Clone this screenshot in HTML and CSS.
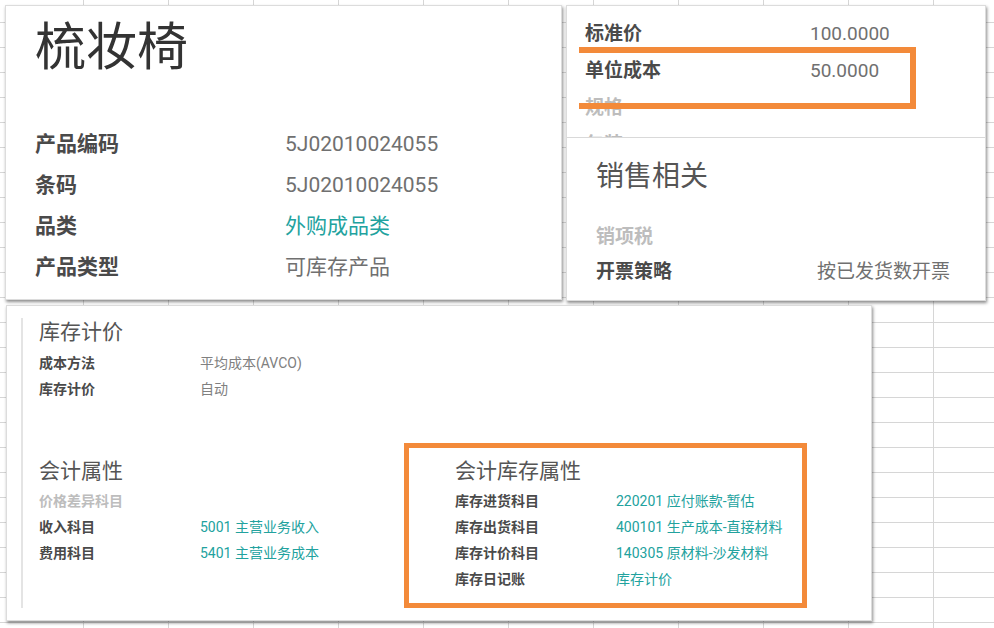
FILE: index.html
```html
<!DOCTYPE html>
<html lang="zh">
  <head>
    <meta charset="UTF-8" />
    <title>梳妆椅</title>
    <link rel="stylesheet" href="styles.css">
  </head>
  <body>
    <div class="card card_product">
      <h1 class="product_title">梳妆椅</h1>
      <div class="field_list">
        <div class="label">产品编码</div>
        <div class="value">5J02010024055</div>
        <div class="label">条码</div>
        <div class="value">5J02010024055</div>
        <div class="label">品类</div>
        <div class="value link">外购成品类</div>
        <div class="label">产品类型</div>
        <div class="value">可库存产品</div>
      </div>
    </div>

    <div class="card card_price">
      <div class="price_top">
        <div class="label">标准价</div>
        <div class="value">100.0000</div>
        <div class="label">单位成本</div>
        <div class="value">50.0000</div>
        <div class="label muted">规格</div>
        <div class="value"></div>
        <div class="label muted">包装</div>
        <div class="value"></div>
      </div>
      <div class="sales">
        <h2 class="sales_title">销售相关</h2>
        <div class="sales_list">
          <div class="label muted">销项税</div>
          <div class="value"></div>
          <div class="label">开票策略</div>
          <div class="value">按已发货数开票</div>
        </div>
      </div>
    </div>

    <div class="card card_account">
      <div class="sheet">
        <h3 class="group_title">库存计价</h3>
        <div class="small_list first">
          <div class="label">成本方法</div>
          <div class="value">平均成本(AVCO)</div>
          <div class="label">库存计价</div>
          <div class="value">自动</div>
        </div>
        <div class="columns">
          <div>
            <h3 class="group_title">会计属性</h3>
            <div class="small_list">
              <div class="label muted">价格差异科目</div>
              <div class="value"></div>
              <div class="label">收入科目</div>
              <div class="value link">5001 主营业务收入</div>
              <div class="label">费用科目</div>
              <div class="value link">5401 主营业务成本</div>
            </div>
          </div>
          <div>
            <h3 class="group_title">会计库存属性</h3>
            <div class="small_list">
              <div class="label">库存进货科目</div>
              <div class="value link">220201 应付账款-暂估</div>
              <div class="label">库存出货科目</div>
              <div class="value link">400101 生产成本-直接材料</div>
              <div class="label">库存计价科目</div>
              <div class="value link">140305 原材料-沙发材料</div>
              <div class="label">库存日记账</div>
              <div class="value link">库存计价</div>
            </div>
          </div>
        </div>
      </div>
    </div>

    <div class="mark mark_cost"></div>
    <div class="mark mark_stock"></div>
  </body>
</html>
```

FILE: styles.css
```css
html,
body {
  margin: 0;
}

body {
  position: relative;
  width: 994px;
  height: 628px;
  overflow: hidden;
  background-color: #fff;
  background-image: linear-gradient(to right, #d6d6d6 1px, transparent 1px),
    linear-gradient(to bottom, #d6d6d6 1px, transparent 1px);
  background-size: 85px 25px;
  background-position: 83px 22px;
  font-family: Roboto, "Noto Sans CJK SC", sans-serif;
  color: #555;
}

h1,
h2,
h3 {
  margin: 0;
  font-weight: 400;
}

.card {
  position: absolute;
  box-sizing: border-box;
  background: #fff;
  border: 1px solid #dcdcdc;
  box-shadow: 1px 2px 3px rgba(0, 0, 0, 0.45);
}

.label {
  font-weight: 700;
  color: #4a4a4a;
}

.label.muted {
  color: #bdbdbd;
}

.value {
  color: #707070;
}

.value.link {
  color: #22a29e;
}

/* product card */
.card_product {
  left: 5px;
  top: 5px;
  width: 557px;
  height: 295px;
  padding: 15px 0 0 29px;
}

.product_title {
  font-size: 51px;
  line-height: 54px;
  color: #333;
  margin-bottom: 49px;
}

.field_list {
  display: grid;
  grid-template-columns: 250px auto;
  font-size: 21px;
  line-height: 41px;
}

/* price / sales card */
.card_price {
  left: 566px;
  top: 5px;
  width: 420px;
  height: 296px;
}

.price_top {
  box-sizing: border-box;
  height: 131px;
  overflow: hidden;
  padding: 9px 0 0 18px;
  display: grid;
  grid-template-columns: 225px auto;
  grid-auto-rows: 37px;
  font-size: 19px;
  line-height: 37px;
}

.sales {
  border-top: 1px solid #d9d9d9;
  padding: 21px 0 0 29px;
}

.sales_title {
  font-size: 28px;
  line-height: 36px;
  margin-bottom: 24px;
}

.sales_list {
  display: grid;
  grid-template-columns: 221px auto;
  grid-auto-rows: 35px;
  font-size: 19px;
  line-height: 35px;
}

/* accounting card */
.card_account {
  left: 6px;
  top: 305px;
  width: 866px;
  height: 316px;
}

.sheet {
  margin: 12px 0 0 14px;
  height: 290px;
  border-left: 2px solid #e4e4e4;
  padding-left: 16px;
}

.group_title {
  font-size: 21px;
  line-height: 28px;
}

.small_list {
  display: grid;
  grid-template-columns: 161px auto;
  grid-auto-rows: 26.3px;
  font-size: 14px;
  line-height: 26px;
  margin-top: 3px;
}

.small_list .value {
  color: #808080;
}

.small_list .value.link {
  color: #22a29e;
}

.small_list.first {
  margin-top: 4px;
}

.columns {
  display: grid;
  grid-template-columns: 416px 416px;
  margin-top: 54px;
}

/* orange annotations */
.mark {
  position: absolute;
  box-sizing: border-box;
  border: 6px solid #f38a3a;
}

.mark_cost {
  left: 579px;
  top: 47px;
  width: 337px;
  height: 62px;
  border-left: none;
}

.mark_stock {
  left: 404px;
  top: 443px;
  width: 403px;
  height: 165px;
  border-width: 5px;
}
```
